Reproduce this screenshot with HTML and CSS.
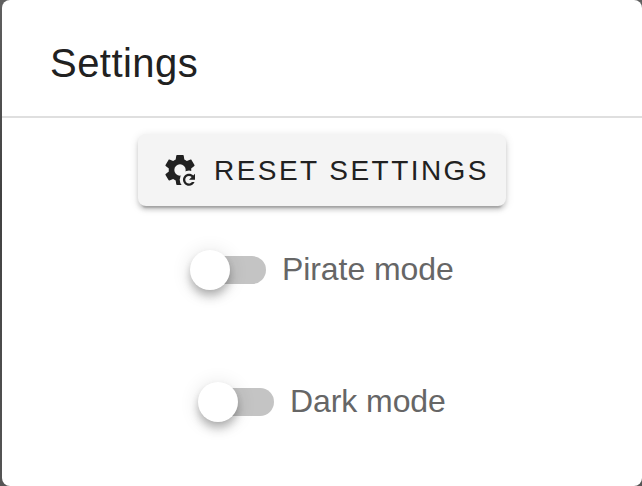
FILE: index.html
```html
<!DOCTYPE html>
<html lang="en">
<head>
<meta charset="utf-8">
<title>Settings</title>
<link rel="stylesheet" href="styles.css">
</head>
<body>
<main class="card">
  <h1 class="title"><span class="title-text">Settings</span></h1>
  <div class="content">
    <button class="reset" type="button">
      <svg class="icon" viewBox="0 0 24 24" aria-hidden="true">
        <mask id="cut"><rect width="24" height="24" fill="#fff"/><circle cx="12" cy="12" r="3.8" fill="#000"/><circle cx="18" cy="18.5" r="6.2" fill="#000"/></mask>
        <path mask="url(#cut)" d="M19.43,12.97C19.47,12.65 19.5,12.33 19.5,12C19.5,11.67 19.47,11.34 19.43,11L21.54,9.37C21.73,9.22 21.78,8.95 21.66,8.73L19.66,5.27C19.54,5.05 19.27,4.96 19.05,5.05L16.56,6.05C16.04,5.66 15.5,5.32 14.87,5.07L14.5,2.42C14.46,2.18 14.25,2 14,2H10C9.75,2 9.54,2.18 9.5,2.42L9.13,5.07C8.5,5.32 7.96,5.66 7.44,6.05L4.95,5.05C4.73,4.96 4.46,5.05 4.34,5.27L2.34,8.73C2.21,8.95 2.27,9.22 2.46,9.37L4.57,11C4.53,11.34 4.5,11.67 4.5,12C4.5,12.33 4.53,12.65 4.57,12.97L2.46,14.63C2.27,14.78 2.21,15.05 2.34,15.27L4.34,18.73C4.46,18.95 4.73,19.03 4.95,18.95L7.44,17.94C7.96,18.34 8.5,18.68 9.13,18.93L9.5,21.58C9.54,21.82 9.75,22 10,22H14V18.5H19.43Z"/>
        <path d="M18 14.5C19.11 14.5 20.11 14.95 20.83 15.67L22 14.5V18.5H18L19.77 16.73C19.32 16.28 18.69 16 18 16C16.62 16 15.5 17.12 15.5 18.5C15.5 19.88 16.62 21 18 21C18.82 21 19.54 20.61 20 20H21.71C21.12 21.47 19.68 22.5 18 22.5C15.79 22.5 14 20.71 14 18.5C14 16.29 15.79 14.5 18 14.5Z"/>
      </svg>
      <span class="reset-text">RESET SETTINGS</span>
    </button>
    <label class="row pirate"><span class="switch"><span class="thumb"></span></span><span class="label">Pirate mode</span></label>
    <label class="row dark"><span class="switch"><span class="thumb"></span></span><span class="label">Dark mode</span></label>
  </div>
</main>
</body>
</html>
```
FILE: styles.css
```css
* { box-sizing: border-box; }
body {
  margin: 0;
  height: 486px;
  padding-left: 2px;
  overflow: hidden;
  background: linear-gradient(#606060, #414141 40%, #555);
  font-family: "Liberation Sans", Arial, sans-serif;
}
.card {
  height: 486px;
  border-radius: 8px;
  background: #fff;
  overflow: hidden;
}
.title {
  display: flex;
  align-items: center;
  margin: 0;
  height: 118px;
  padding: 10px 48px 0;
  border-bottom: 2px solid #dfdfdf;
  color: #212121;
  font-size: 40px;
  font-weight: 400;
  letter-spacing: .45px;
}
.content {
  display: flex;
  flex-direction: column;
  align-items: flex-start;
  padding-top: 16px;
}
.reset {
  display: flex;
  align-items: center;
  width: 368px;
  height: 72px;
  margin: 0 0 0 136px;
  padding: 0 0 0 24px;
  border: 0;
  border-radius: 8px;
  background: #f4f4f4;
  box-shadow: 0 6px 2px -4px rgba(0,0,0,.2), 0 4px 4px rgba(0,0,0,.14), 0 2px 10px rgba(0,0,0,.12);
  color: #212121;
  font: 28px "Liberation Sans", Arial, sans-serif;
  letter-spacing: 2.45px;
  white-space: nowrap;
}
.reset-text { padding-top: 1px; }
.icon {
  width: 36px;
  height: 36px;
  margin-right: 16px;
  fill: #212121;
}
.row {
  display: flex;
  align-items: center;
  height: 48px;
  color: #666;
  font-size: 32px;
  white-space: nowrap;
}
.label {
  padding-bottom: 2px;
  letter-spacing: -.08px;
}
.pirate { margin: 40px 0 0 192px; }
.dark { margin: 84px 0 0 200px; }
.switch {
  display: flex;
  align-items: center;
  width: 72px;
  height: 28px;
  margin-right: 16px;
  border-radius: 14px;
  background: #c4c4c4;
}
.thumb {
  flex: none;
  width: 40px;
  height: 40px;
  margin-left: -4px;
  border-radius: 50%;
  background: #fff;
  box-shadow: 0 4px 8px -2px rgba(0,0,0,.2), 0 8px 10px rgba(0,0,0,.14), 0 2px 20px rgba(0,0,0,.12);
}
```
